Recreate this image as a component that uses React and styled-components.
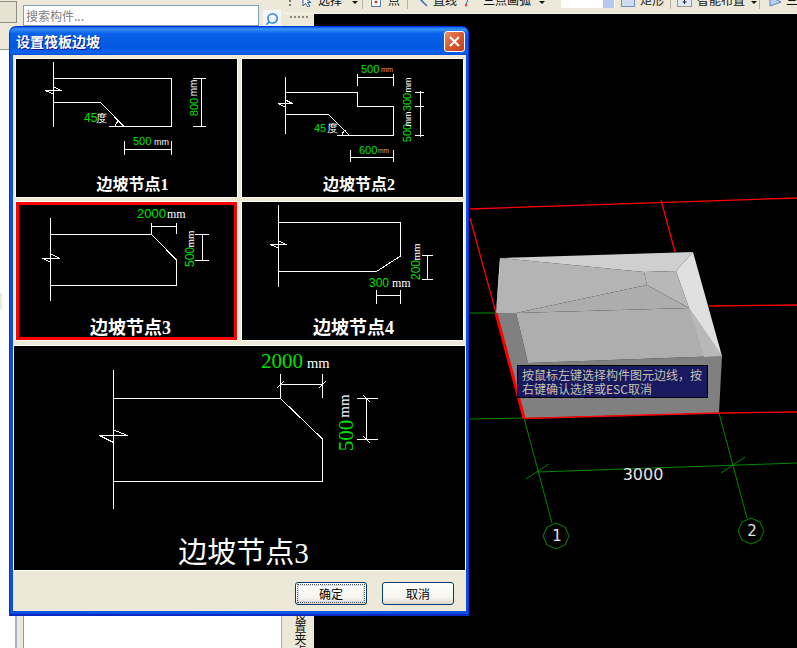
import React from "react";
import styled, { createGlobalStyle } from "styled-components";
import { Search } from "lucide-react";

const UI_FONT = '"Noto Sans CJK SC", "Noto Sans", sans-serif';
const SERIF_FONT = '"Liberation Serif", "Noto Sans CJK SC", serif';
const BEIGE = "#ece9d8";

const GlobalStyle = createGlobalStyle`
  html, body {
    margin: 0;
    padding: 0;
    background: #000;
    overflow: hidden;
  }
`;

const Page = styled.div`
  position: relative;
  display: flex;
  width: 797px;
  height: 648px;
  overflow: hidden;
  background: #000;
  font-family: ${UI_FONT};
  font-size: 12px;
`;

/* left dock */
const LeftPanel = styled.div`
  display: flex;
  flex-direction: column;
  flex: 0 0 284px;
  background: ${BEIGE};
`;

const SearchRow = styled.div`
  display: flex;
  align-items: flex-start;
  height: 50px;
  box-sizing: border-box;
  border-bottom: 1px solid #9a9a90;
`;

const DockTab = styled.div`
  width: 17px;
  height: 22px;
  margin-top: 1px;
  box-sizing: border-box;
  background: #e6e2d2;
  border: 1px solid #8c8c84;
  border-left: none;
`;

const SearchInput = styled.div`
  width: 236px;
  height: 21px;
  margin: 5px 0 0 6px;
  box-sizing: border-box;
  padding-left: 2px;
  background: #fff;
  border: 1px solid #7f9db9;
  color: #808080;
  line-height: 19px;
`;

const SearchButton = styled.div`
  display: flex;
  align-items: center;
  justify-content: center;
  width: 18px;
  height: 18px;
  margin: 10px 0 0 4px;
  background: #f3f6fa;
  color: #2f86d8;

  svg {
    transform: scaleX(-1);
  }
`;

const DockBody = styled.div`
  display: flex;
  flex: 1;
`;

const Rail = styled.div`
  flex: 0 0 15px;
  background: #fff;
  border-right: 2px solid #a4b2c4;
`;

const RailMark = styled.div`
  width: 2px;
  height: 16px;
  margin-top: 243px;
  background: ${BEIGE};
`;

const ListBox = styled.div`
  flex: 0 0 259px;
  margin-left: 6px;
  box-sizing: border-box;
  background: #fff;
  border-left: 1px solid #7f9db9;
  border-right: 1px solid #9fb0c5;
`;

/* toolbar and drawing area */
const Workspace = styled.div`
  display: flex;
  flex-direction: column;
  flex: 1;
  min-width: 0;
`;

const Toolbar = styled.div`
  display: flex;
  align-items: flex-end;
  flex: 0 0 14px;
  box-sizing: border-box;
  padding-bottom: 6px;
  overflow: hidden;
  background: ${BEIGE};
  border-bottom: 1px solid #f6f4ea;
  color: #111;
`;

const Grip = styled.div`
  flex: 0 0 14px;
  height: 8px;
  background: radial-gradient(circle at 6px 2px, #777 1px, transparent 1.2px) 0 0 / 14px 4px;
`;

const Tool = styled.div`
  display: flex;
  align-items: flex-end;
  flex: 0 0 ${(props) => props.$width}px;
  box-sizing: border-box;
  padding-left: ${(props) => props.$pad}px;
  gap: ${(props) => props.$gap || 5}px;
  line-height: 14px;
  white-space: nowrap;

  svg {
    flex-shrink: 0;
  }
`;

const ToolSeparator = styled.div`
  flex: 0 0 1px;
  height: 14px;
  margin-bottom: -2px;
  background: #b5b2a0;
`;

const Caret = styled.span`
  width: 0;
  height: 0;
  margin: 0 0 3px ${(props) => props.$left}px;
  border: 3px solid transparent;
  border-top-color: #111;
  border-bottom: none;
`;

const ToolInput = styled.div`
  position: relative;
  flex: 0 0 54px;
  height: 8px;
  margin: 0 0 -1px 10px;
  background: #fff;

  &::after {
    content: "";
    position: absolute;
    right: 1px;
    top: 0;
    width: 11px;
    height: 8px;
    background: #b5c8f0;
  }
`;

const CanvasRow = styled.div`
  display: flex;
  flex: 1;
  min-height: 0;
`;

const SideStrip = styled.div`
  display: flex;
  flex-direction: column;
  justify-content: flex-end;
  flex: 0 0 30px;
  box-sizing: border-box;
  padding-left: 10px;
  overflow: hidden;
  background: ${BEIGE};
`;

const StripGrip = styled.div`
  width: 18px;
  height: 2px;
  margin: 2px 0 auto -4px;
  background: repeating-linear-gradient(90deg, #8a8a80 0 2px, transparent 2px 4px);
`;

const StripLabel = styled.div`
  align-self: flex-start;
  writing-mode: vertical-rl;
  margin-bottom: -9px;
  line-height: 12px;
  color: #111;
`;

const Viewport = styled.div`
  position: relative;
  flex: 1;
  background: #000;
`;

const SceneSvg = styled.svg`
  display: block;
`;

const SceneLabel = styled.text`
  font-family: "DejaVu Sans", sans-serif;
  font-size: ${(props) => props.$size}px;
  fill: #e4e4e4;
  text-anchor: middle;
`;

const HintBox = styled.div`
  position: absolute;
  left: 203px;
  top: 351px;
  width: 191px;
  height: 33px;
  box-sizing: border-box;
  padding: 2px 0 0 4px;
  background: #191960;
  border: 1px solid #000;
  color: #c4c2ae;
  line-height: 14px;
  white-space: nowrap;
`;

/* dialog */
const Dialog = styled.div`
  position: absolute;
  left: 9px;
  top: 26px;
  display: flex;
  flex-direction: column;
  width: 460px;
  height: 590px;
  box-sizing: border-box;
  padding: 0 2px 3px 3px;
  background: linear-gradient(90deg, #0a4fe0 0, #0a5be8 50%, #0a4fe0 100%);
  border: 1px solid #0831d9;
  border-bottom: 2px solid #0a28c8;
  border-radius: 7px 7px 0 0;
`;

const TitleBar = styled.div`
  display: flex;
  align-items: center;
  justify-content: space-between;
  flex: 0 0 28px;
  margin: 0 -2px 0 -3px;
  padding: 0 3px 0 6px;
  background: linear-gradient(180deg, #0a5fe6 0, #3a92f6 8%, #0a63ea 22%, #0458e0 70%, #0a62ee 90%, #0450d4 100%);
  border-radius: 6px 6px 0 0;
`;

const TitleText = styled.div`
  color: #fff;
  font-size: 14px;
  font-weight: 700;
  line-height: 28px;
  text-shadow: 1px 1px 0 #0f1a89;
`;

const CloseButton = styled.div`
  display: flex;
  align-items: center;
  justify-content: center;
  width: 21px;
  height: 21px;
  box-sizing: border-box;
  margin-top: 1px;
  background: linear-gradient(135deg, #e8906e 0, #d9562e 50%, #c4401c 100%);
  border: 1px solid #fff;
  border-radius: 3px;
`;

const ClientArea = styled.div`
  display: flex;
  flex-direction: column;
  flex: 1;
  background: ${BEIGE};
`;

const TileGrid = styled.div`
  display: grid;
  grid-template-columns: 221px 221px;
  grid-template-rows: 138px 138px;
  gap: 5px;
  padding: 4px 3px 0;
`;

const Tile = styled.div`
  display: flex;
  flex-direction: column;
  background: #000;
  outline: 1px solid #fdfcf6;
  box-shadow: ${(props) => (props.$selected ? "inset 0 0 0 3px #ff0000" : "none")};
`;

const Diagram = styled.svg`
  display: block;
  flex-shrink: 0;
`;

const TileLabel = styled.div`
  height: 25px;
  padding-left: ${(props) => props.$shift}px;
  color: #fff;
  font-family: ${SERIF_FONT};
  font-size: ${(props) => props.$size}px;
  font-weight: 700;
  line-height: 26px;
  text-align: center;
  white-space: nowrap;
`;

const Preview = styled.div`
  display: flex;
  flex-direction: column;
  height: 224px;
  margin: 6px 0 0 1px;
  width: 451px;
  background: #000;
  outline: 1px solid #fdfcf6;
`;

const PreviewLabel = styled.div`
  height: 37px;
  padding-left: 8px;
  color: #fff;
  font-family: ${SERIF_FONT};
  font-size: 29px;
  line-height: 40px;
  text-align: center;
  white-space: nowrap;
`;

const Footer = styled.div`
  display: flex;
  justify-content: flex-end;
  gap: 15px;
  padding: 12px 12px 0 0;
`;

const Button = styled.button`
  position: relative;
  width: 72px;
  height: 23px;
  padding: 0;
  background: linear-gradient(180deg, #fff 0, #f6f5ef 70%, #dcd8c8 100%);
  border: 1px solid #003c74;
  border-radius: 3px;
  color: #000;
  font-family: ${UI_FONT};
  font-size: 12px;
  line-height: 20px;

  &::after {
    content: "";
    display: ${(props) => (props.$focused ? "block" : "none")};
    position: absolute;
    inset: 1px;
    border: 1px dotted #555;
    box-shadow: inset 0 0 0 1px #cfdcf2;
  }
`;

/* diagram drawing parts */
const Stroke = styled.path`
  fill: none;
  stroke: #fff;
  stroke-width: 1;
  shape-rendering: crispEdges;
`;

const Dim = styled.text`
  font-family: ${(props) => (props.$serif ? SERIF_FONT : '"Liberation Sans", sans-serif')};
  font-size: ${(props) => props.$size}px;
  fill: ${(props) => props.$fill || "#00e000"};
`;

const Rotated = ({ x, y, children, ...rest }) => (
  <Dim x={x} y={y} textAnchor="middle" transform={`rotate(-90 ${x} ${y})`} {...rest}>
    {children}
  </Dim>
);

const OrangeUnit = ({ x, y, length }) => (
  <Dim x={x} y={y} $size={8} $fill="#e0a060" textLength={length} lengthAdjust="spacingAndGlyphs">
    mm
  </Dim>
);

const NodeOne = () => (
  <Diagram width="221" height="113" viewBox="16 59 221 113">
    <Stroke d="M53.5 62V126.5M53.5 78.5H171.5V126.5H109M53.5 102.5H100.5L124 126.5" />
    <Stroke d="M45 90.5H61.5L53.5 87M45 90.5L53.5 94M115.5 126Q116 122 119 121" />
    <Stroke d="M201.5 78.5V127M193 78.5H206M193 126.5H206M124.5 149.5H171.5M124.5 141V155M171.5 141V155" />
    <Dim x="84" y="122" $size={12}>45</Dim>
    <Dim x="96" y="122" $size={11} $fill="#fff">度</Dim>
    <Rotated x="198" y="107" $size={11}>800</Rotated>
    <Rotated x="197" y="88" $size={10} $fill="#fff">mm</Rotated>
    <Dim x="133" y="145" $size={11}>500</Dim>
    <Dim x="154" y="145" $size={9} $fill="#fff">mm</Dim>
  </Diagram>
);

const NodeTwo = () => (
  <Diagram width="221" height="113" viewBox="242 59 221 113">
    <Stroke d="M285.5 77V134M285.5 92.5H357.5V106.5H393.5V135.5H336.5M285.5 114.5H328.5L349.5 135.5" />
    <Stroke d="M278 103.5H292.5L285.5 100M278 103.5L285.5 107M342 135Q343 131 346 130" />
    <Stroke d="M357.5 77.5H393.5M357.5 74V85.5M393.5 74V85.5M420.5 91V136.5M415 92.5H424M415 106.5H424M415 135.5H424" />
    <Stroke d="M350.5 157.5H393.5M350.5 150V162M393.5 150V162" />
    <Dim x="361" y="73" $size={11}>500</Dim>
    <OrangeUnit x="381" y="72" length={12} />
    <Dim x="359" y="154" $size={11}>600</Dim>
    <OrangeUnit x="378" y="153" length={11} />
    <Dim x="314" y="132" $size={11}>45</Dim>
    <Dim x="327" y="132" $size={11} $fill="#fff">度</Dim>
    <Rotated x="411" y="102" $size={11}>300</Rotated>
    <Rotated x="411" y="85" $size={9} $fill="#fff">mm</Rotated>
    <Rotated x="411" y="133" $size={11}>500</Rotated>
    <Rotated x="411" y="119" $size={9} $fill="#fff">mm</Rotated>
  </Diagram>
);

const NodeThree = () => (
  <Diagram width="221" height="113" viewBox="16 202 221 113">
    <Stroke d="M50.5 218V301M50.5 234.5H151.5L176.5 260V285.5H50.5" />
    <Stroke d="M42.5 258.5H60L50.5 254M42.5 258.5L50.5 262" />
    <Stroke d="M151.5 226.5H176.5M151.5 223V234M176.5 223V234M202.5 234.5V260.5M195 234.5H209M195 260.5H209" />
    <Dim x="137" y="218" $size={13}>2000</Dim>
    <Dim x="167" y="218" $size={12} $fill="#fff" $serif>mm</Dim>
    <Rotated x="194" y="257" $size={12}>500</Rotated>
    <Rotated x="194" y="239" $size={11} $fill="#fff" $serif>mm</Rotated>
  </Diagram>
);

const NodeFour = () => (
  <Diagram width="221" height="113" viewBox="242 202 221 113">
    <Stroke d="M278.5 205V287M278.5 222.5H400.5V256L376.5 271.5H278.5" />
    <Stroke d="M270 244.5H286.5L278.5 241M270 244.5L278.5 248" />
    <Stroke d="M427.5 255V280M421.5 255.5H432.5M421.5 279.5H432.5M376.5 295.5H400.5M376.5 290V304M400.5 290V304" />
    <Dim x="369" y="287" $size={12}>300</Dim>
    <Dim x="392" y="287" $size={12} $fill="#fff" $serif>mm</Dim>
    <Rotated x="420" y="270" $size={12}>200</Rotated>
    <Rotated x="420" y="252" $size={11} $fill="#fff" $serif>mm</Rotated>
  </Diagram>
);

const LargeNode = () => (
  <Diagram width="451" height="187" viewBox="14 346 451 187">
    <Stroke d="M113.5 370V509M113.5 398.5H280.5L322.5 439V481.5H113.5" />
    <Stroke d="M99.5 435.5H127.5L113.5 430M99.5 435.5L113.5 442.5" />
    <Stroke d="M280.5 384.5H322.5M280.5 374V398M322.5 374V398M277 388L284 381M319 388L326 381" />
    <Stroke d="M366.5 398.5V439.5M356.5 398.5H377.5M356.5 439.5H377.5M363 395L370 402M363 436L370 443" />
    <Dim x="261" y="368" $size={21} $serif>2000</Dim>
    <Dim x="307" y="368" $size={14.5} $fill="#fff" $serif>mm</Dim>
    <Rotated x="352.5" y="435.5" $size={21} $serif>500</Rotated>
    <Rotated x="349" y="406" $size={15} $fill="#fff" $serif>mm</Rotated>
  </Diagram>
);

const tiles = [
  { id: 1, label: "边坡节点1", shift: 12, size: 16, Drawing: NodeOne },
  { id: 2, label: "边坡节点2", shift: 13, size: 16, Drawing: NodeTwo },
  { id: 3, label: "边坡节点3", shift: 8, size: 18, selected: true, Drawing: NodeThree },
  { id: 4, label: "边坡节点4", shift: 2, size: 18, Drawing: NodeFour },
];

const Scene = () => (
  <SceneSvg width="483" height="634" viewBox="314 14 483 634">
    <g fill="none" stroke="#ff0000" strokeWidth="1.3">
      <path d="M470 209L797 198" />
      <path d="M661 200L675 252" />
      <path d="M470 218L496 313" />
      <path d="M709 306L797 305" />
      <path d="M719 413L797 412" />
    </g>
    <g fill="none" stroke="#008a00" strokeWidth="1">
      <path d="M470 313H496M470 419L524 418" />
      <path d="M524 418L552 523M719 413L747 518" />
      <path d="M538 472L797 463" />
      <path d="M526 479L549 464M721 473L745 457" />
      <polygon points="556,523 565,527 569,536 565,545 556,549 547,545 543,536 547,527" />
      <polygon points="751,518 760,522 764,531 760,540 751,544 742,540 738,531 742,522" />
    </g>
    <polygon points="496,313 516,313 528,363 722,356 719,413 524,418" fill="#808080" />
    <polygon points="500,258 644,272 647,285 516,313 496,313" fill="#b4b4b4" />
    <polygon points="500,258 496,313 500,270" fill="#d2d2d2" />
    <polygon points="500,258 693,252 676,271 644,272" fill="#cfcfcf" />
    <polygon points="644,272 676,271 689,308 647,285" fill="#b8b8b8" />
    <polygon points="516,313 647,285 689,308" fill="#adadad" />
    <polygon points="516,313 689,308 722,356 528,363" fill="#aeaeae" />
    <polygon points="689,308 722,356 704,357" fill="#b8b8b8" />
    <polygon points="693,252 722,356 689,308 676,271" fill="#e0e0e0" />
    <path d="M496 313L524 418" fill="none" stroke="#ff0000" strokeWidth="3" />
    <path d="M524 418.5L719 413" fill="none" stroke="#ff0000" strokeWidth="1.5" />
    <SceneLabel x="643" y="480" $size={16}>3000</SceneLabel>
    <SceneLabel x="557" y="541" $size={15}>1</SceneLabel>
    <SceneLabel x="752" y="536" $size={15}>2</SceneLabel>
  </SceneSvg>
);

export default function App() {
  return (
    <Page>
      <GlobalStyle />
      <LeftPanel>
        <SearchRow>
          <DockTab />
          <SearchInput>搜索构件...</SearchInput>
          <SearchButton>
            <Search size={14} strokeWidth={2.6} />
          </SearchButton>
        </SearchRow>
        <DockBody>
          <Rail>
            <RailMark />
          </Rail>
          <ListBox />
        </DockBody>
      </LeftPanel>

      <Workspace>
        <Toolbar>
          <Grip />
          <Tool $width={64} $pad={4} $gap={6}>
            <svg width="10" height="10" viewBox="0 0 10 10">
              <path d="M1 0V9L3.5 6.5L6 10L8 9L5.5 5.5H9Z" fill="#fff" stroke="#2a5a9a" />
            </svg>
            选择
            <Caret $left={4} />
          </Tool>
          <ToolSeparator />
          <Tool $width={44} $pad={8} $gap={7}>
            <svg width="10" height="10" viewBox="0 0 10 10">
              <rect x="0.5" y="0.5" width="9" height="9" fill="#fff" stroke="#5a7ab0" />
              <circle cx="5" cy="5" r="1.5" fill="#d04040" />
            </svg>
            点
          </Tool>
          <ToolSeparator />
          <Tool $width={52} $pad={10} $gap={5}>
            <svg width="10" height="10" viewBox="0 0 10 10">
              <path d="M0 0L9 9" stroke="#3a6ab8" strokeWidth="1.5" />
            </svg>
            直线
          </Tool>
          <Tool $width={91} $pad={5} $gap={13}>
            <svg width="5" height="10" viewBox="0 0 5 10">
              <path d="M4 0L1 8" stroke="#3a6ab8" />
              <circle cx="1" cy="8" r="1.5" fill="#e05050" />
            </svg>
            三点画弧
            <Caret $left={-5} />
          </Tool>
          <ToolInput />
          <Tool $width={55} $pad={6} $gap={5}>
            <svg width="14" height="10" viewBox="0 0 14 10">
              <rect x="0.5" y="0.5" width="13" height="9" fill="#cfdcf6" stroke="#6f8fc8" />
            </svg>
            矩形
          </Tool>
          <ToolSeparator />
          <Tool $width={88} $pad={6} $gap={5}>
            <svg width="15" height="10" viewBox="0 0 15 10">
              <rect x="0.5" y="0.5" width="14" height="9" fill="#dfe8f6" stroke="#444" strokeDasharray="1 1" />
              <path d="M7.5 3V7M5.5 5H9.5" stroke="#222" />
            </svg>
            智能布置
            <Caret $left={1} />
          </Tool>
          <ToolSeparator />
          <Tool $width={47} $pad={9} $gap={4}>
            <svg width="13" height="10" viewBox="0 0 13 10">
              <path d="M1 0V9L12 5Z" fill="#bcd2f4" stroke="#5a80c0" />
            </svg>
            三点
          </Tool>
        </Toolbar>
        <CanvasRow>
          <SideStrip>
            <StripGrip />
            <StripLabel>设置夹点</StripLabel>
          </SideStrip>
          <Viewport>
            <Scene />
            <HintBox>
              按鼠标左键选择构件图元边线，按
              <br />
              右键确认选择或ESC取消
            </HintBox>
          </Viewport>
        </CanvasRow>
      </Workspace>

      <Dialog>
        <TitleBar>
          <TitleText>设置筏板边坡</TitleText>
          <CloseButton>
            <svg width="13" height="13" viewBox="0 0 13 13">
              <path d="M2 2L11 11M11 2L2 11" stroke="#fff" strokeWidth="2.2" />
            </svg>
          </CloseButton>
        </TitleBar>
        <ClientArea>
          <TileGrid>
            {tiles.map(({ id, label, shift, size, selected, Drawing }) => (
              <Tile key={id} $selected={selected}>
                <Drawing />
                <TileLabel $shift={shift} $size={size}>{label}</TileLabel>
              </Tile>
            ))}
          </TileGrid>
          <Preview>
            <LargeNode />
            <PreviewLabel>边坡节点3</PreviewLabel>
          </Preview>
          <Footer>
            <Button $focused>确定</Button>
            <Button>取消</Button>
          </Footer>
        </ClientArea>
      </Dialog>
    </Page>
  );
}
